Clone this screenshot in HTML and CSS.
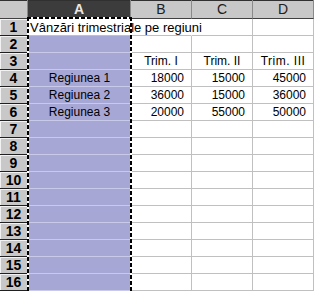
FILE: index.html
```html
<!DOCTYPE html>
<html lang="ro">
<head>
  <meta charset="UTF-8" />
  <title>Vânzări trimestriale</title>
  <link rel="stylesheet" href="styles.css">
</head>
<body>
  <div class="sheet">
    <div class="corner"></div>
    <div class="colhead sel">A</div>
    <div class="colhead">B</div>
    <div class="colhead">C</div>
    <div class="colhead">D</div>

    <div class="rowhead">1</div>
    <div class="cell a active">Vânzări trimestriale pe regiuni</div>
    <div class="cell nobr"></div>
    <div class="cell"></div>
    <div class="cell"></div>

    <div class="rowhead">2</div>
    <div class="cell a"></div><div class="cell"></div><div class="cell"></div><div class="cell"></div>

    <div class="rowhead">3</div>
    <div class="cell a"></div>
    <div class="cell mid">Trim. I</div>
    <div class="cell mid">Trim. II</div>
    <div class="cell mid wide">Trim. III</div>

    <div class="rowhead">4</div>
    <div class="cell a mid">Regiunea 1</div>
    <div class="cell num">18000</div>
    <div class="cell num">15000</div>
    <div class="cell num">45000</div>

    <div class="rowhead">5</div>
    <div class="cell a mid">Regiunea 2</div>
    <div class="cell num">36000</div>
    <div class="cell num">15000</div>
    <div class="cell num">36000</div>

    <div class="rowhead">6</div>
    <div class="cell a mid">Regiunea 3</div>
    <div class="cell num">20000</div>
    <div class="cell num">55000</div>
    <div class="cell num">50000</div>

    <div class="rowhead">7</div>
    <div class="cell a"></div><div class="cell"></div><div class="cell"></div><div class="cell"></div>
    <div class="rowhead">8</div>
    <div class="cell a"></div><div class="cell"></div><div class="cell"></div><div class="cell"></div>
    <div class="rowhead">9</div>
    <div class="cell a"></div><div class="cell"></div><div class="cell"></div><div class="cell"></div>
    <div class="rowhead">10</div>
    <div class="cell a"></div><div class="cell"></div><div class="cell"></div><div class="cell"></div>
    <div class="rowhead">11</div>
    <div class="cell a"></div><div class="cell"></div><div class="cell"></div><div class="cell"></div>
    <div class="rowhead">12</div>
    <div class="cell a"></div><div class="cell"></div><div class="cell"></div><div class="cell"></div>
    <div class="rowhead">13</div>
    <div class="cell a"></div><div class="cell"></div><div class="cell"></div><div class="cell"></div>
    <div class="rowhead">14</div>
    <div class="cell a"></div><div class="cell"></div><div class="cell"></div><div class="cell"></div>
    <div class="rowhead">15</div>
    <div class="cell a"></div><div class="cell"></div><div class="cell"></div><div class="cell"></div>
    <div class="rowhead">16</div>
    <div class="cell a"></div><div class="cell"></div><div class="cell"></div><div class="cell"></div>

    <div class="ants"></div>
  </div>
</body>
</html>
```

FILE: styles.css
```css
body {
  margin: 0;
  background: #fff;
  font-family: "Liberation Sans", Arial, sans-serif;
}

.sheet {
  position: relative;
  width: 314px;
  height: 292px;
  display: grid;
  grid-template-columns: 28px 103px 61px 61px 61px;
  grid-template-rows: 19px repeat(16, 17px);
  background: #fff;
  overflow: hidden;
}

.corner, .colhead {
  box-sizing: border-box;
  background: #c8c8c8;
  border-bottom: 1px solid #404040;
  border-right: 1px solid #8a8a8a;
  box-shadow: inset 0 1px 0 #303030;
}

.colhead {
  text-align: center;
  font-size: 14px;
  line-height: 18px;
  color: #202020;
}

.colhead.sel {
  background: #3c3c3c;
  color: #e8e8e8;
  font-weight: bold;
}

.rowhead {
  box-sizing: border-box;
  background: #c8c8c8;
  border-right: 1px solid #000;
  border-bottom: 1px solid #202020;
  box-shadow: inset 1px 1px 0 #f2f2f2;
  text-align: center;
  font-size: 14px;
  font-weight: bold;
  line-height: 17px;
  color: #000;
}

.cell {
  box-sizing: border-box;
  border-right: 1px solid #c0c0c0;
  border-bottom: 1px solid #c0c0c0;
  font-size: 12px;
  line-height: 17px;
  white-space: nowrap;
  color: #000;
}

.cell.a {
  background: #a7a7d6;
  border-bottom-color: #c9c9e9;
  border-right: none;
}

.cell.active {
  background: #fff;
  border-bottom-color: #c0c0c0;
  padding-left: 2px;
  font-size: 13px;
}

.cell.nobr {
  border-right-color: transparent;
}

.mid {
  text-align: center;
}

.wide {
  letter-spacing: 0.5px;
}

.num {
  text-align: right;
  padding-right: 7px;
}

.ants {
  position: absolute;
  left: 27px;
  top: 17px;
  width: 105px;
  bottom: 0;
  background:
    repeating-linear-gradient(to bottom, #000 0 4px, #fff 4px 6px) left top / 2px 100% no-repeat,
    repeating-linear-gradient(to bottom, #000 0 4px, #fff 4px 6px) right top / 2px 100% no-repeat,
    repeating-linear-gradient(to right, #000 0 4px, #fff 4px 6px) left top / 100% 2px no-repeat;
}
```
